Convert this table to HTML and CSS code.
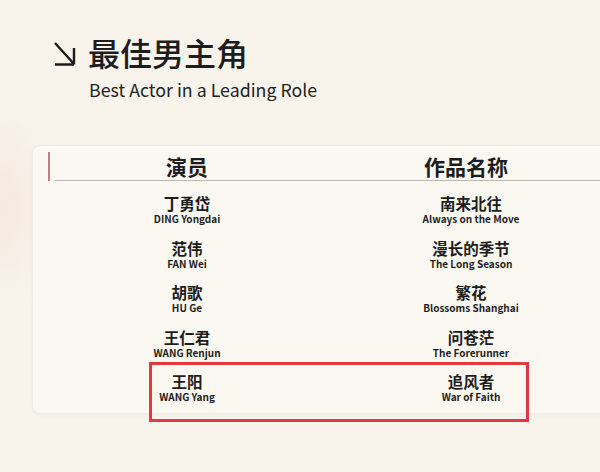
FILE: index.html
```html
<!DOCTYPE html>
<html lang="zh-CN">
<head>
    <meta charset="UTF-8">
    <meta name="viewport" content="width=device-width, initial-scale=1.0">
    <title>最佳男主角</title>
    <link rel="stylesheet" href="styles.css">
</head>
<body>
    <header class="award-head">
        <div class="award-title">
            <svg class="arrow" width="24" height="26" viewBox="0 0 24 26">
                <path d="M2 2 L21 23 M21 7 V23.5 M2 23.5 H21" fill="none" stroke="#1c1c1c" stroke-width="2.4"/>
            </svg>
            <h1>最佳男主角</h1>
        </div>
        <p class="award-sub">Best Actor in a Leading Role</p>
    </header>

    <main class="card">
        <div class="card-head">
            <span class="mark"></span>
            <div class="head-cols">
                <div>演员</div>
                <div>作品名称</div>
            </div>
        </div>

        <div class="rows">
            <div class="row">
                <div class="cell"><span class="cn">丁勇岱</span><span class="en">DING Yongdai</span></div>
                <div class="cell"><span class="cn">南来北往</span><span class="en">Always on the Move</span></div>
            </div>
            <div class="row">
                <div class="cell"><span class="cn">范伟</span><span class="en">FAN Wei</span></div>
                <div class="cell"><span class="cn">漫长的季节</span><span class="en">The Long Season</span></div>
            </div>
            <div class="row">
                <div class="cell"><span class="cn">胡歌</span><span class="en">HU Ge</span></div>
                <div class="cell"><span class="cn">繁花</span><span class="en">Blossoms Shanghai</span></div>
            </div>
            <div class="row">
                <div class="cell"><span class="cn">王仁君</span><span class="en">WANG Renjun</span></div>
                <div class="cell"><span class="cn">问苍茫</span><span class="en">The Forerunner</span></div>
            </div>
            <div class="row winner">
                <div class="cell"><span class="cn">王阳</span><span class="en">WANG Yang</span></div>
                <div class="cell"><span class="cn">追风者</span><span class="en">War of Faith</span></div>
            </div>
        </div>
    </main>
</body>
</html>
```

FILE: styles.css
```css
html, body {
    margin: 0;
    width: 600px;
    height: 472px;
    overflow: hidden;
}

body {
    font-family: 'Noto Sans CJK SC', sans-serif;
    color: #1d1d1d;
    background:
        radial-gradient(ellipse 60px 110px at 0 205px, rgba(242, 218, 210, 0.45), rgba(242, 218, 210, 0)),
        #f8f4ec;
}

.award-head {
    padding: 32px 0 0 53px;
}

.award-title {
    display: flex;
    align-items: center;
    gap: 11px;
}

.arrow {
    margin-top: 3px;
}

h1 {
    margin: 0;
    font-size: 32px;
    line-height: 40px;
    font-weight: 500;
}

.award-sub {
    margin: 6px 0 0 36px;
    font-size: 17.8px;
    line-height: 22px;
    color: #222;
}

.card {
    box-sizing: border-box;
    width: 594px;
    margin: 45px 0 0 32px;
    padding: 6px 12px 10px;
    background: #fbf8f2;
    border: 1px solid rgba(120, 100, 80, 0.08);
    border-radius: 8px;
    box-shadow: 0 1px 3px rgba(120, 100, 80, 0.06);
}

.card-head {
    display: flex;
}

.mark {
    flex-shrink: 0;
    width: 2px;
    margin-left: 3px;
    background: #c77b80;
}

.head-cols {
    display: grid;
    grid-template-columns: 264px 294px;
    margin-left: 5px;
    border-bottom: 1px solid #bfb7ae;
    font-size: 21px;
    line-height: 28px;
    font-weight: 700;
    text-align: center;
}

.rows {
    display: flex;
    flex-direction: column;
    gap: 13.5px;
    padding-top: 13px;
}

.row {
    display: grid;
    grid-template-columns: 284px 284px;
    position: relative;
}

.cell {
    display: flex;
    flex-direction: column;
    align-items: center;
}

.cn {
    font-size: 15.5px;
    line-height: 18px;
    font-weight: 700;
}

.en {
    font-size: 10px;
    line-height: 13px;
    font-weight: 700;
}

.winner::after {
    content: "";
    position: absolute;
    top: -10px;
    left: 104px;
    width: 380px;
    height: 60px;
    box-sizing: border-box;
    border: 3px solid #e03a40;
}
```
